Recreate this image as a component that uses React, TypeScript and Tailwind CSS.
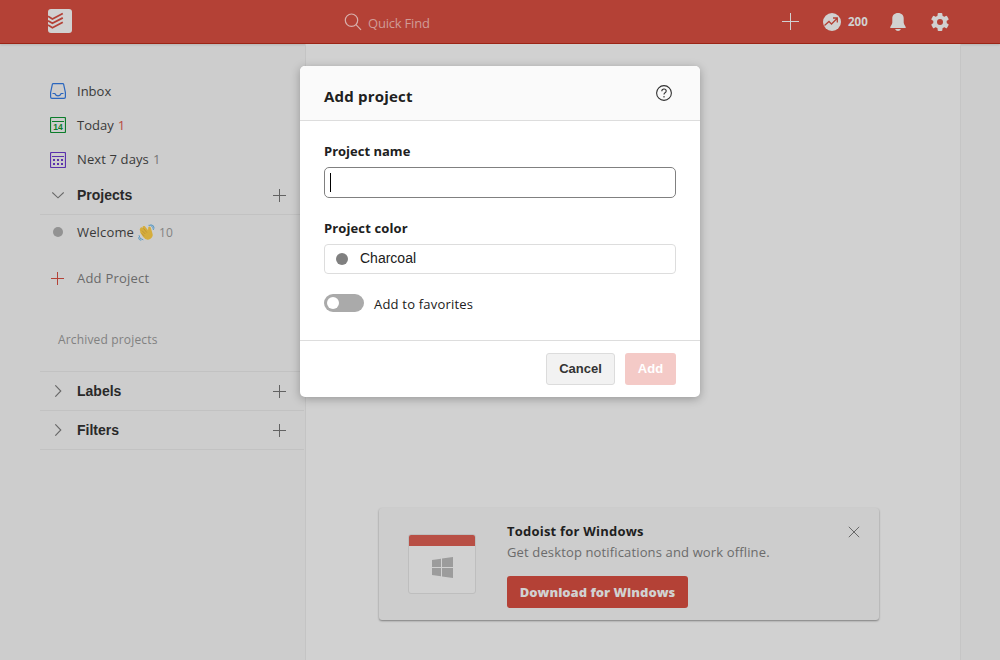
import type { ReactNode } from 'react';

function Plus({ className, size = 13 }: { className: string; size?: number }) {
  const m = Math.floor(size / 2) + 0.5;
  return (
    <svg width={size} height={size} viewBox={`0 0 ${size} ${size}`} className={className} fill="none" stroke="currentColor">
      <path d={`M${m} 0V${size}M0 ${m}H${size}`} />
    </svg>
  );
}

function InboxIcon() {
  return (
    <svg width="16" height="16" viewBox="0 0 16 16" fill="none" stroke="#2a66be" strokeWidth="1.2">
      <path d="M3.2 .6H12.8Q13.4 .6 13.6 1.2L15.4 9.6V14Q15.4 15.4 14 15.4H2Q.6 15.4 .6 14V9.6L2.4 1.2Q2.6 .6 3.2 .6Z" />
      <path d="M2.5 10.5H4.8Q5.8 12.9 8 12.9T11.2 10.5H13.5" />
    </svg>
  );
}

function TodayIcon() {
  return (
    <svg width="16" height="16" viewBox="0 0 16 16" fill="none" stroke="#0c7d2b">
      <rect x=".5" y=".5" width="15" height="15" rx="1" strokeWidth="1.2" />
      <path d="M2 4.5H14" />
      <text x="8" y="13" textAnchor="middle" stroke="none" fill="#0c7d2b" fontFamily="Liberation Sans, sans-serif" fontWeight="700" fontSize="8.5">14</text>
    </svg>
  );
}

function WeekIcon() {
  return (
    <svg width="16" height="16" viewBox="0 0 16 16" className="mt-[2px]" fill="none" stroke="#5a31ac">
      <rect x=".5" y=".5" width="15" height="15" rx="1" strokeWidth="1.2" />
      <path d="M2 4.5H14" />
      <path d="M3 8H13M3 12H13" strokeWidth="2" strokeDasharray="2 2" />
    </svg>
  );
}

function Wave() {
  return (
    <svg width="17" height="17" viewBox="0 0 17 17" className="ml-[4px] mt-[1px]" fill="none">
      <path d="M2.2 7.2Q1 5.2 2.5 3.7Q3.8 2.8 5 4.2L4.5 3Q5 1.4 6.7 2.1L10 6.2L10.3 3.3Q11.5 1.6 12.6 3.2L14.2 8.5Q15.8 12.8 12.1 15.1Q8 17 5 12.8L2.2 8.6Z" fill="#d5ad3c" />
      <path d="M4 6.6L7.3 10M5.5 4.4L8.9 8.6M3.7 9.4L6.4 12.2" stroke="#b58b31" strokeWidth=".7" />
      <path d="M10.5 1.3Q14.7 .7 15.5 6M12.5 .6Q16.3 1 16.2 4.4M1 11.2Q1.2 15.2 5.3 15.8M.4 13.4Q.8 16.2 3.2 16.3" stroke="#5b9ac4" strokeWidth="1" />
    </svg>
  );
}

function NavRow({ icon, children }: { icon: ReactNode; children: ReactNode }) {
  return (
    <li className="flex h-[34px] items-center">
      <span className="mr-[11px] flex w-[16px] justify-center">{icon}</span>
      {children}
    </li>
  );
}

function Section({ title, open = false }: { title: string; open?: boolean }) {
  return (
    <div className="-ml-[10px] mr-[1px] flex h-[39px] items-center border-b border-[#c2c2c2] pl-[10px] pr-[18px]">
      <span className="mr-[11px] flex w-[16px] justify-center">
        <svg width="12" height="12" viewBox="0 0 12 12" fill="none" stroke="#686868" strokeWidth="1.1">
          <path d={open ? 'M.3 3.5L6 8.8L11.7 3.5' : 'M3.3 .3L8.8 6L3.3 11.7'} />
        </svg>
      </span>
      <h2 className="flex-1 font-['Liberation_Sans',sans-serif] text-[14px] font-bold leading-[20px] text-[#292929]">{title}</h2>
      <Plus className="text-[#626262]" />
    </div>
  );
}

function Header() {
  return (
    <header className="flex h-[44px] shrink-0 items-center border-b border-[#9b2516] bg-[#b44136] pl-[48px] pr-[51px] shadow-[0_1px_2px_rgba(0,0,0,0.12)]">
      <svg width="24" height="24" viewBox="0 0 24 24" className="-mt-[1px]">
        <rect width="24" height="24" rx="3" fill="#d1d1d1" />
        <path d="M0 7.3L4.4 10L14.8 4.5M0 11.8L4.4 14.3L14.8 8.9M0 16L4.4 18.7L14.8 13.2" fill="none" stroke="#b44136" strokeWidth="1.8" />
      </svg>
      <div className="ml-[272px] flex flex-1 items-center">
        <svg width="18" height="18" viewBox="0 0 18 18" fill="none" stroke="#d8b0ac" strokeWidth="1.2">
          <circle cx="7.5" cy="7.2" r="6.2" />
          <path d="M12 11.7L17 16.8" />
        </svg>
        <span className="ml-[6px] mt-[3px] text-[13px] leading-[18px] tracking-[-0.2px] text-[#d09c97]">Quick Find</span>
      </div>
      <Plus size={17} className="text-[#d1d1d1]" />
      <svg width="18" height="18" viewBox="0 0 18 18" className="ml-[24px]" fill="none">
        <circle cx="9" cy="9" r="9" fill="#d1d1d1" />
        <path d="M1.5 12.5L6 8.5L8.5 11L14 5.5M10 5H14.3V9.5" stroke="#b44136" strokeWidth="1.3" />
      </svg>
      <span className="ml-[7px] w-[20px] text-[11.5px] font-bold leading-[16px] text-[#d1d1d1]">200</span>
      <svg width="16" height="18" viewBox="0 0 16 18" className="ml-[22px]" fill="#d1d1d1">
        <path d="M8 0C4.4 0 2.3 2.3 2.3 5.5V9.5C2.3 12 .2 12.5 .2 15H15.8C15.8 12.5 13.7 12 13.7 9.5V5.5C13.7 2.3 11.6 0 8 0ZM5 16H11Q10 18 8 18T5 16Z" />
      </svg>
      <svg width="18" height="18" viewBox="0 0 18 18" className="ml-[25px]">
        <g fill="#d1d1d1">
          <circle cx="9" cy="9" r="6.8" />
          <rect x="6.6" y="0" width="4.8" height="18" rx="1" />
          <rect x="6.6" y="0" width="4.8" height="18" rx="1" transform="rotate(60 9 9)" />
          <rect x="6.6" y="0" width="4.8" height="18" rx="1" transform="rotate(120 9 9)" />
        </g>
        <circle cx="9" cy="9" r="3" fill="#b44136" />
      </svg>
    </header>
  );
}

function Sidebar() {
  return (
    <aside className="w-[306px] shrink-0 border-r border-[#c4c4c4] pl-[50px] pt-[30px] text-[13px] leading-[18px] text-[#393939]">
      <ul>
        <NavRow icon={<InboxIcon />}><span>Inbox</span></NavRow>
        <NavRow icon={<TodayIcon />}>
          <span>Today</span><span className="ml-[4px] text-[#b84a40]">1</span>
        </NavRow>
        <NavRow icon={<WeekIcon />}>
          <span className="tracking-[0.12px]">Next 7 days</span><span className="ml-[4px] text-[#777777]">1</span>
        </NavRow>
      </ul>
      <Section title="Projects" open />
      <ul>
        <NavRow icon={<span className="size-[10px] rounded-full bg-[#929292]" />}>
          <span className="tracking-[0.15px]">Welcome</span><Wave /><span className="ml-[4px] mt-[1px] text-[12px] text-[#838383]">10</span>
        </NavRow>
      </ul>
      <button className="mt-[12px] flex h-[34px] items-center tracking-[0.22px] text-[#6a6a6a]">
        <Plus className="ml-[1px] mr-[13px] text-[#b44136]" />Add Project
      </button>
      <div className="-ml-[10px] mr-[1px] mt-[27px] h-[50px] border-b border-[#c2c2c2] pl-[18px] pt-[9px] text-[12px] tracking-[0.16px] text-[#818181]">Archived projects</div>
      <Section title="Labels" />
      <Section title="Filters" />
    </aside>
  );
}

function WindowsCard() {
  return (
    <section className="ml-[73px] mt-[464px] flex h-[112px] w-[500px] rounded-[3px] bg-[#cdcdcd] shadow-[0_1px_2px_rgba(0,0,0,0.4)]">
      <div className="ml-[29px] mt-[26px] flex h-[60px] w-[68px] flex-col overflow-hidden rounded-[3px] border border-[#bebebe] bg-[#d1d1d1]">
        <div className="h-[11px] bg-[#b84f45]" />
        <div className="flex flex-1 items-start justify-center pt-[11px]">
          <svg width="21" height="21" viewBox="0 0 21 21" fill="#9c9c9c">
            <path d="M0 3L9 1.7V10H0ZM10 1.5L21 0V10H10ZM0 11H9V19.3L0 18ZM10 11H21V21L10 19.5Z" />
          </svg>
        </div>
      </div>
      <div className="ml-[31px] flex flex-1 flex-col items-start pt-[13px] text-[13px]">
        <h3 className="font-bold leading-[21px] tracking-[0.22px] text-[#1f1f1f]">Todoist for Windows</h3>
        <p className="leading-[21px] tracking-[0.14px] text-[#6b6b6b]">Get desktop notifications and work offline.</p>
        <button className="mt-[13px] h-[32px] w-[181px] whitespace-nowrap rounded-[3px] bg-[#b44136] font-extrabold leading-[18px] text-[#d1d1d1]">Download for Windows</button>
      </div>
      <svg width="12" height="12" viewBox="0 0 12 12" className="mr-[19px] mt-[18px]" stroke="#686868">
        <path d="M.8 .8L11.2 11.2M11.2 .8L.8 11.2" />
      </svg>
    </section>
  );
}

function AddProjectDialog() {
  return (
    <div role="dialog" className="absolute left-[300px] top-[66px] flex h-[331px] w-[400px] flex-col overflow-hidden rounded-[5px] bg-white text-[13px] text-[#202020] shadow-[0_2px_10px_rgba(0,0,0,0.28)]">
      <div className="flex h-[55px] shrink-0 items-center justify-between border-b border-[#dddddd] bg-[#fafafa] pl-[24px] pr-[28px]">
        <h1 className="mt-[5px] text-[15px] font-bold leading-[20px] tracking-[0.2px]">Add project</h1>
        <svg width="16" height="16" viewBox="0 0 16 16" fill="none" stroke="#303030" strokeWidth="1.1">
          <circle cx="8" cy="8" r="7.4" />
          <path d="M5.8 6.2Q5.8 4 8 4T10.2 6Q10.2 7 9 7.8Q8 8.4 8 9.6M8 11.1V12.4" />
        </svg>
      </div>
      <div className="flex h-[220px] shrink-0 flex-col border-b border-[#dddddd] px-[24px] pt-[20px]">
        <label className="font-bold leading-[20px]">Project name</label>
        <div className="mt-[6px] flex h-[31px] shrink-0 items-center rounded-[5px] border border-[#808080] pl-[5px]">
          <span className="h-[19px] w-px bg-black" />
        </div>
        <label className="mt-[20px] font-bold leading-[20px] tracking-[0.12px]">Project color</label>
        <div className="mt-[6px] flex h-[30px] shrink-0 items-center rounded-[4px] border border-[#dddddd] pl-[11px]">
          <span className="size-[12px] rounded-full bg-[#808080]" />
          <span className="-mt-[2px] ml-[12px] font-['Liberation_Sans',sans-serif] text-[14px] leading-[18px]">Charcoal</span>
        </div>
        <div className="mt-[20px] flex h-[18px] items-center">
          <span className="flex h-[18px] w-[40px] items-center rounded-full bg-[#aaaaaa] pl-[3px]">
            <span className="size-[12px] rounded-full bg-white" />
          </span>
          <span className="ml-[10px] mt-[2px] leading-[18px] tracking-[0.2px]">Add to favorites</span>
        </div>
      </div>
      <div className="flex justify-end gap-[10px] pr-[24px] pt-[12px] font-['Liberation_Sans',sans-serif] font-bold">
        <button className="h-[32px] w-[69px] rounded-[3px] border border-[#dcdcdc] bg-[#f2f2f2] text-[#333333]">Cancel</button>
        <button className="h-[32px] w-[51px] rounded-[3px] bg-[#f4cac7] text-white">Add</button>
      </div>
    </div>
  );
}

export default function App() {
  return (
    <div className="relative flex h-[660px] w-[1000px] flex-col overflow-hidden bg-[#cdcdcd] font-['Open_Sans','Noto_Sans',sans-serif]">
      <Header />
      <div className="flex flex-1">
        <Sidebar />
        <main className="w-[655px] border-r border-[#c5c5c5] bg-[#d1d1d1]">
          <WindowsCard />
        </main>
      </div>
      <AddProjectDialog />
    </div>
  );
}
